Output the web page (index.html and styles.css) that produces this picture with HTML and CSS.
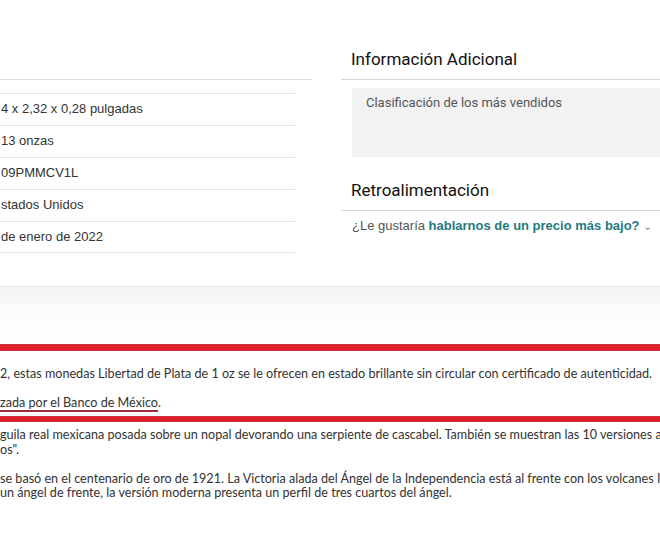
FILE: index.html
```html
<!DOCTYPE html>
<html lang="es">
<head>
<meta charset="utf-8">
<link rel="stylesheet" href="styles.css">
</head>
<body>
<div class="top">
  <div class="left">
    <div class="specs">
      <div class="row">4 x 2,32 x 0,28 pulgadas</div>
      <div class="row">13 onzas</div>
      <div class="row">09PMMCV1L</div>
      <div class="row">stados Unidos</div>
      <div class="row">de enero de 2022</div>
    </div>
  </div>
  <div class="right">
    <h2 class="heading">Información Adicional</h2>
    <div class="rank">Clasificación de los más vendidos</div>
    <h2 class="heading heading-feedback">Retroalimentación</h2>
    <div class="feedback">¿Le gustaría <span class="link">hablarnos de un precio más bajo?</span> <span class="chev">&#8964;</span></div>
  </div>
</div>
<div class="band"></div>
<div class="redbar"></div>
<div class="desc">
  <p>2, estas monedas Libertad de Plata de 1 oz se le ofrecen en estado brillante sin circular con certificado de autenticidad.</p>
  <p class="before-bar"><span class="under">zada por el Banco de México</span>.</p>
  <div class="redbar thin"></div>
  <p>guila real mexicana posada sobre un nopal devorando una serpiente de cascabel. También se muestran las 10 versiones a<br>os".</p>
  <p>se basó en el centenario de oro de 1921. La Victoria alada del Ángel de la Independencia está al frente con los volcanes I<br>un ángel de frente, la versión moderna presenta un perfil de tres cuartos del ángel.</p>
</div>
</body>
</html>
```
FILE: styles.css
```css
* { box-sizing: border-box; }
body {
  margin: 0;
  background: #fff;
  width: 660px;
  overflow: hidden;
  font-family: "Liberation Sans", Arial, sans-serif;
  color: #333;
}
.top {
  display: flex;
  height: 287px;
  border-bottom: 1px solid #e6e6e6;
}
.left {
  width: 341px;
  padding-top: 79px;
}
.specs {
  width: 312px;
  border-top: 1px solid #dcdcdc;
  padding-top: 13px;
}
.row {
  width: 295px;
  height: 32px;
  border-top: 1px solid #e4e4e4;
  padding-left: 1px;
  line-height: 30px;
  font-size: 13px;
  color: #333;
}
.row:last-child { border-bottom: 1px solid #e4e4e4; }
.right {
  flex: 1;
  padding-top: 47px;
}
.heading {
  margin: 0;
  font-family: Roboto, "Noto Sans", sans-serif;
  font-weight: 400;
  font-size: 17px;
  line-height: 24px;
  color: #111;
  padding-left: 10px;
  padding-bottom: 8px;
  border-bottom: 1px solid #d5d5d5;
}
.rank {
  margin: 8px 0 0 11px;
  height: 69px;
  background: #f2f2f2;
  padding: 7px 14px;
  font-family: Roboto, "Noto Sans", sans-serif;
  font-size: 13px;
  color: #555;
}
.heading-feedback { margin-top: 21px; }
.feedback {
  padding: 7px 0 0 11px;
  font-size: 13px;
  color: #555;
}
.link { color: #1f7a7e; font-weight: 700; }
.chev { color: #888; font-size: 11px; }
.band {
  height: 57px;
  background: linear-gradient(#f4f4f4, #fbfbfb 40%, #fff);
}
.redbar {
  height: 7px;
  background: #e21d2b;
  border-top: 1px solid #c8323c;
  border-bottom: 1px solid #c8323c;
}
.redbar.thin { height: 6px; margin: 0 0 6px; }
.desc {
  padding-top: 16px;
  font-family: "Lato", "Open Sans", sans-serif;
  font-size: 12.6px;
  line-height: 14.5px;
  color: #333;
  white-space: nowrap;
}
.desc p { margin: 0 0 14.5px; }
.desc p.before-bar { margin-bottom: 5.5px; }
.under { border-bottom: 2px solid #a0283a; }
```
